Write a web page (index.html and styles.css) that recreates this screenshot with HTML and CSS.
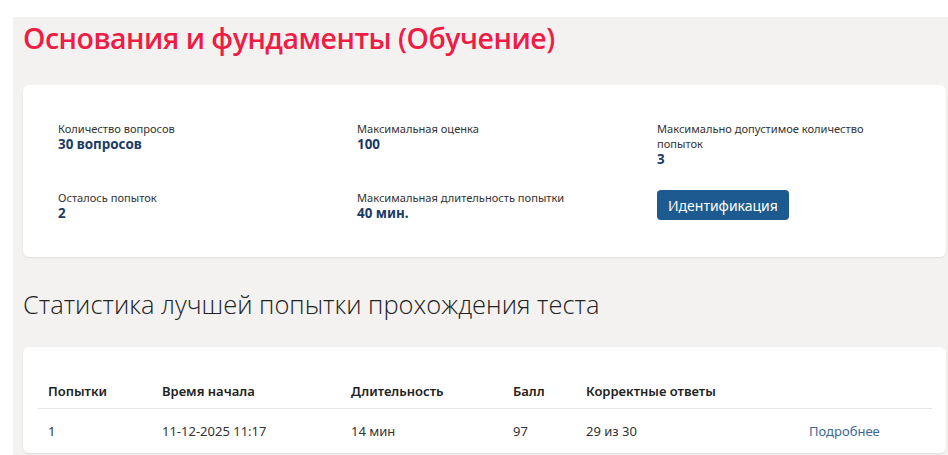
FILE: index.html
```html
<!DOCTYPE html>
<html lang="ru">
<head>
    <meta charset="UTF-8">
    <meta name="viewport" content="width=device-width, initial-scale=1.0">
    <title>Основания и фундаменты (Обучение)</title>
    <link rel="stylesheet" href="styles.css">
</head>
<body>

    <div class="page">
        <h1 class="course-title">Основания и фундаменты (Обучение)</h1>

        <div class="card info-card">
            <div class="info-item">
                <div class="info-label">Количество вопросов</div>
                <div class="info-value">30 вопросов</div>
            </div>
            <div class="info-item">
                <div class="info-label">Максимальная оценка</div>
                <div class="info-value">100</div>
            </div>
            <div class="info-item">
                <div class="info-label">Максимально допустимое количество попыток</div>
                <div class="info-value">3</div>
            </div>
            <div class="info-item">
                <div class="info-label">Осталось попыток</div>
                <div class="info-value">2</div>
            </div>
            <div class="info-item">
                <div class="info-label">Максимальная длительность попытки</div>
                <div class="info-value">40 мин.</div>
            </div>
            <div class="info-item">
                <button class="btn-primary" type="button">Идентификация</button>
            </div>
        </div>

        <h2 class="section-title">Статистика лучшей попытки прохождения теста</h2>

        <div class="card table-card">
            <table class="attempts">
                <colgroup>
                    <col style="width: 114px">
                    <col style="width: 189px">
                    <col style="width: 162px">
                    <col style="width: 73px">
                    <col style="width: 223px">
                    <col>
                </colgroup>
                <thead>
                    <tr>
                        <th>Попытки</th>
                        <th>Время начала</th>
                        <th>Длительность</th>
                        <th>Балл</th>
                        <th>Корректные ответы</th>
                        <th></th>
                    </tr>
                </thead>
                <tbody>
                    <tr>
                        <td>1</td>
                        <td>11-12-2025 11:17</td>
                        <td>14 мин</td>
                        <td>97</td>
                        <td>29 из 30</td>
                        <td><a href="#" class="details-link">Подробнее</a></td>
                    </tr>
                </tbody>
            </table>
        </div>
    </div>

</body>
</html>
```

FILE: styles.css
```css
/* General */
body {
    margin: 0;
    padding: 0;
    background-color: #fff;
    font-family: 'Noto Sans', 'Open Sans', sans-serif;
    color: #333;
}

.page {
    margin: 17px 0 0 13px;
    padding: 1px 2px 0 10px;
    background-color: #f3f2f1;
    min-height: 440px;
}

/* Titles */
.course-title {
    margin: 0;
    font-family: 'Open Sans', sans-serif;
    font-size: 28.5px;
    font-weight: 600;
    line-height: 40px;
    color: #ee1d45;
    letter-spacing: -0.5px;
}

.section-title {
    margin: 30px 0 0;
    font-family: 'Open Sans', sans-serif;
    font-size: 25.5px;
    font-weight: 300;
    line-height: 34px;
    color: #222;
}

/* Cards */
.card {
    background-color: #fff;
    border-radius: 6px;
    box-shadow: 0 1px 2px rgba(0, 0, 0, 0.08);
}

.info-card {
    margin-top: 27px;
    padding: 36px 20px 35px 35px;
    display: grid;
    grid-template-columns: 299px 300px 1fr;
    row-gap: 22px;
}

.info-item {
    max-width: 240px;
}

.info-label {
    font-size: 11.1px;
    line-height: 15px;
    color: #333;
}

.info-value {
    font-size: 13.4px;
    font-weight: 700;
    line-height: 17px;
    color: #1b3a66;
}

.btn-primary {
    height: 30px;
    padding: 0 11px;
    border: none;
    border-radius: 4px;
    background-color: #1d5a8f;
    color: #fff;
    font-family: 'Noto Sans', sans-serif;
    font-size: 14px;
    cursor: pointer;
}

/* Attempts table */
.table-card {
    margin-top: 26px;
    padding: 31px 14px 0 15px;
}

.attempts {
    width: 100%;
    border-collapse: collapse;
    table-layout: fixed;
    font-size: 13px;
}

.attempts th,
.attempts td {
    text-align: left;
    padding: 0 10px;
    line-height: 20px;
}

.attempts th {
    font-weight: 600;
    color: #222;
    padding-top: 3px;
    padding-bottom: 7px;
    border-bottom: 1px solid #e6e6e6;
}

.attempts td {
    padding-top: 12px;
    padding-bottom: 12px;
    color: #333;
}

.details-link {
    color: #3b6898;
    text-decoration: none;
}
```
